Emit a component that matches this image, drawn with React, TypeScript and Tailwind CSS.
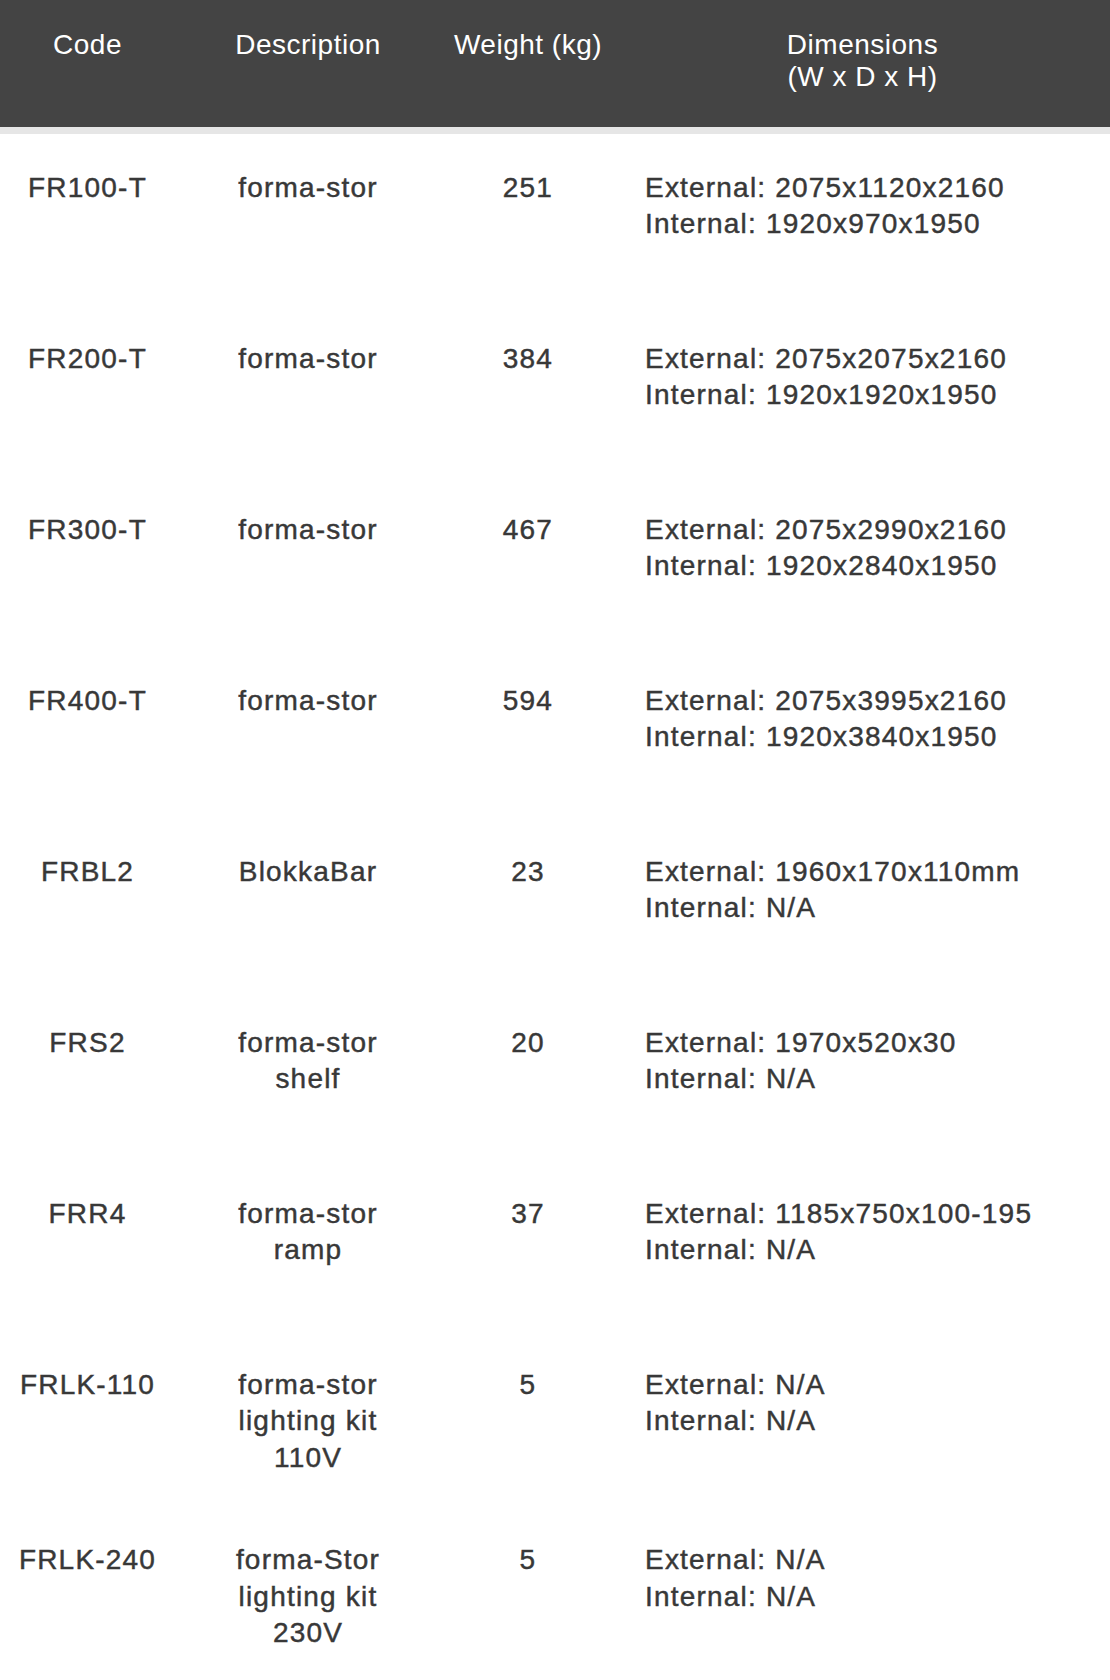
import React from 'react';

type Row = {
  code: string;
  description: string;
  weight: string;
  external: string;
  internal: string;
};

const rows: Row[] = [
  { code: 'FR100-T', description: 'forma-stor', weight: '251', external: '2075x1120x2160', internal: '1920x970x1950' },
  { code: 'FR200-T', description: 'forma-stor', weight: '384', external: '2075x2075x2160', internal: '1920x1920x1950' },
  { code: 'FR300-T', description: 'forma-stor', weight: '467', external: '2075x2990x2160', internal: '1920x2840x1950' },
  { code: 'FR400-T', description: 'forma-stor', weight: '594', external: '2075x3995x2160', internal: '1920x3840x1950' },
  { code: 'FRBL2', description: 'BlokkaBar', weight: '23', external: '1960x170x110mm', internal: 'N/A' },
  { code: 'FRS2', description: 'forma-stor shelf', weight: '20', external: '1970x520x30', internal: 'N/A' },
  { code: 'FRR4', description: 'forma-stor ramp', weight: '37', external: '1185x750x100-195', internal: 'N/A' },
  { code: 'FRLK-110', description: 'forma-stor lighting kit 110V', weight: '5', external: 'N/A', internal: 'N/A' },
  { code: 'FRLK-240', description: 'forma-Stor lighting kit 230V', weight: '5', external: 'N/A', internal: 'N/A' },
];

const cols = 'grid grid-cols-[175px_266px_174px_1fr]';

export default function App() {
  return (
    <div className="w-[1110px] min-h-[1680px] bg-white font-['Liberation_Sans',Arial,sans-serif]">
      {/* Header */}
      <div className={`${cols} h-[127px] bg-[#444444] pt-[29px] text-[28px] leading-[32px] tracking-[0.5px] text-white`}>
        <div className="text-center">Code</div>
        <div className="text-center">Description</div>
        <div className="text-center">Weight (kg)</div>
        <div className="text-center">
          Dimensions
          <br />
          (W x D x H)
        </div>
      </div>
      <div className="h-[7px] bg-[#e6e6e6]" />

      {/* Rows */}
      {rows.map((row) => (
        <div
          key={row.code}
          className={`${cols} min-h-[171px] pt-[36px] pb-[30px] text-[28px] leading-[36.4px] tracking-[1.2px] text-[#383838] [-webkit-text-stroke:0.45px_#383838]`}
        >
          <div className="px-[10px] text-center">{row.code}</div>
          <div className="px-[30px] text-center">{row.description}</div>
          <div className="px-[10px] text-center">{row.weight}</div>
          <div className="pl-[30px] pr-[10px] text-left">
            <div>External: {row.external}</div>
            <div>Internal: {row.internal}</div>
          </div>
        </div>
      ))}
    </div>
  );
}
